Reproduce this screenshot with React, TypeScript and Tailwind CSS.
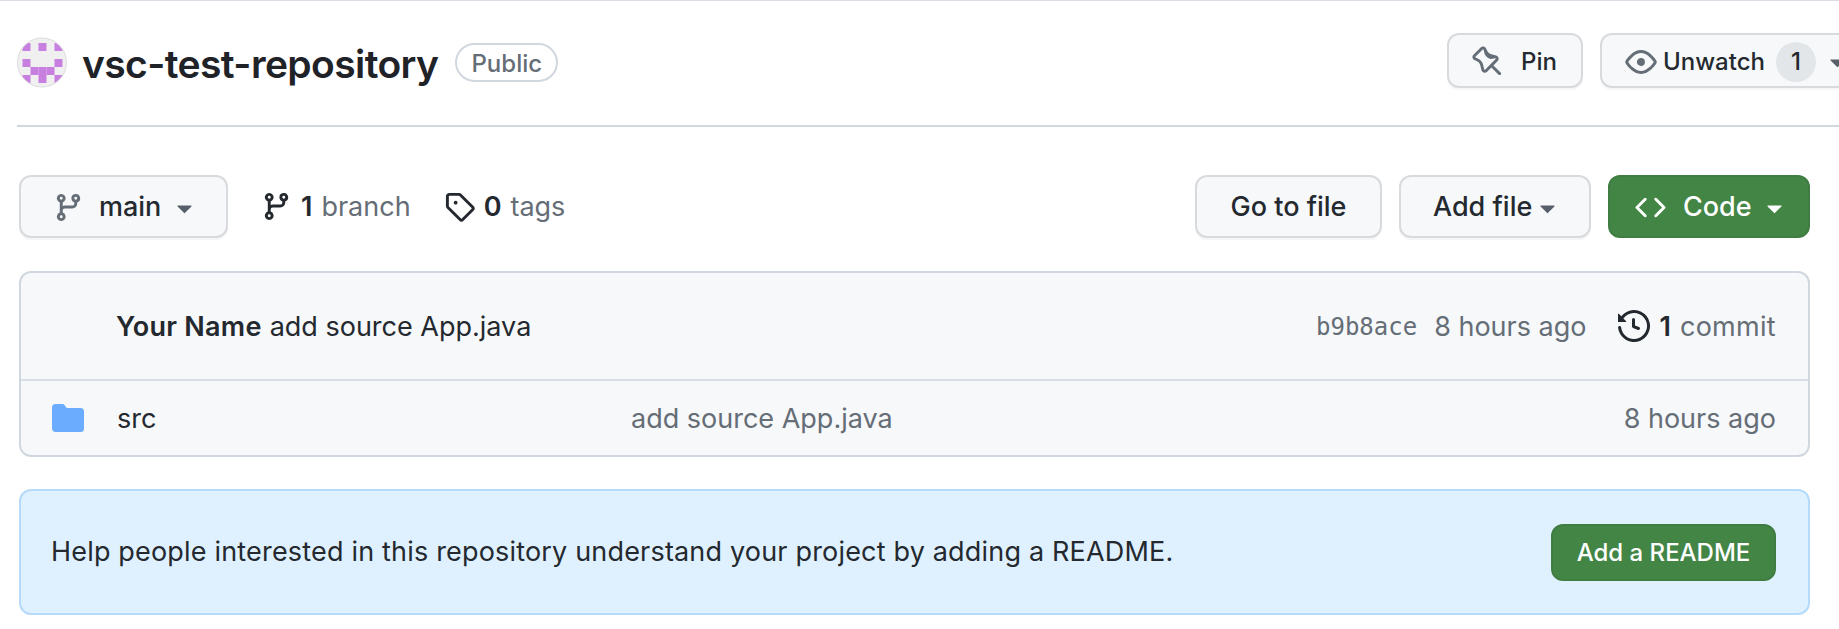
import { type JSX, type ReactNode } from "react";

// octicons, 16px grid
const paths = {
  branch:
    "M9.5 3.25a2.25 2.25 0 1 1 3 2.122V6A2.5 2.5 0 0 1 10 8.5H6a1 1 0 0 0-1 1v1.128a2.251 2.251 0 1 1-1.5 0V5.372a2.25 2.25 0 1 1 1.5 0v1.836A2.493 2.493 0 0 1 6 7h4a1 1 0 0 0 1-1v-.628A2.25 2.25 0 0 1 9.5 3.25Zm-6 0a.75.75 0 1 0 1.5 0 .75.75 0 0 0-1.5 0Zm8.25-.75a.75.75 0 1 0 0 1.5.75.75 0 0 0 0-1.5ZM4.25 12a.75.75 0 1 0 0 1.5.75.75 0 0 0 0-1.5Z",
  tag: "M1 7.775V2.75C1 1.784 1.784 1 2.75 1h5.025c.464 0 .91.184 1.238.513l6.25 6.25a1.75 1.75 0 0 1 0 2.474l-5.026 5.026a1.75 1.75 0 0 1-2.474 0l-6.25-6.25A1.75 1.75 0 0 1 1 7.775Zm1.5 0c0 .066.026.13.073.177l6.25 6.25a.25.25 0 0 0 .354 0l5.025-5.025a.25.25 0 0 0 0-.354l-6.25-6.25a.25.25 0 0 0-.177-.073H2.75a.25.25 0 0 0-.25.25ZM6 5a1 1 0 1 1 0 2 1 1 0 0 1 0-2Z",
  eye: "M8 2c1.981 0 3.671.992 4.933 2.078 1.27 1.091 2.187 2.345 2.637 3.023a1.62 1.62 0 0 1 0 1.798c-.45.678-1.367 1.932-2.637 3.023C11.67 13.008 9.981 14 8 14c-1.981 0-3.671-.992-4.933-2.078C1.797 10.83.88 9.576.43 8.898a1.62 1.62 0 0 1 0-1.798c.45-.677 1.367-1.931 2.637-3.022C4.33 2.992 6.019 2 8 2ZM1.679 7.932a.12.12 0 0 0 0 .136c.411.622 1.241 1.75 2.366 2.717C5.176 11.758 6.527 12.5 8 12.5c1.473 0 2.825-.742 3.955-1.715 1.124-.967 1.954-2.096 2.366-2.717a.12.12 0 0 0 0-.136c-.412-.621-1.242-1.75-2.366-2.717C10.824 4.242 9.473 3.5 8 3.5c-1.473 0-2.825.742-3.955 1.715-1.124.967-1.954 2.096-2.366 2.717ZM8 10a2 2 0 1 1-.001-3.999A2 2 0 0 1 8 10Z",
  code: "m11.28 3.22 4.25 4.25a.75.75 0 0 1 0 1.06l-4.25 4.25a.749.749 0 0 1-1.275-.326.749.749 0 0 1 .215-.734L13.94 8l-3.72-3.72a.749.749 0 0 1 .326-1.275.749.749 0 0 1 .734.215Zm-6.56 0a.751.751 0 0 1 1.042.018.751.751 0 0 1 .018 1.042L2.06 8l3.72 3.72a.749.749 0 0 1-.326 1.275.749.749 0 0 1-.734-.215L.47 8.53a.75.75 0 0 1 0-1.06Z",
  history:
    "m.427 1.927 1.215 1.215a8.002 8.002 0 1 1-1.6 5.685.75.75 0 1 1 1.493-.154 6.5 6.5 0 1 0 1.18-4.458l1.358 1.358A.25.25 0 0 1 3.896 6H.25A.25.25 0 0 1 0 5.75V2.104a.25.25 0 0 1 .427-.177ZM7.75 4a.75.75 0 0 1 .75.75v2.992l2.028.812a.75.75 0 0 1-.557 1.392l-2.5-1A.751.751 0 0 1 7 8.25v-3.5A.75.75 0 0 1 7.75 4Z",
  pin: "M4.456.734a1.75 1.75 0 0 1 2.826.504l.613 1.327a3.081 3.081 0 0 0 2.084 1.707l2.454.584c1.332.317 1.8 1.972.832 2.94L11.06 10l3.72 3.72a.748.748 0 0 1-.332 1.265.75.75 0 0 1-.729-.205L10 11.06l-2.204 2.205c-.968.968-2.623.5-2.94-.832l-.584-2.454a3.081 3.081 0 0 0-1.707-2.084l-1.327-.613a1.75 1.75 0 0 1-.504-2.826L4.456.734ZM5.92 1.866a.25.25 0 0 0-.404-.072L1.794 5.516a.25.25 0 0 0 .072.404l1.328.613A4.582 4.582 0 0 1 5.73 9.63l.584 2.454a.25.25 0 0 0 .42.12l5.47-5.47a.25.25 0 0 0-.12-.42L9.63 6.73a4.581 4.581 0 0 1-3.098-2.537L5.92 1.866Z",
  folder:
    "M1.75 1A1.75 1.75 0 0 0 0 2.75v10.5C0 14.216.784 15 1.75 15h12.5A1.75 1.75 0 0 0 16 13.25v-8.5A1.75 1.75 0 0 0 14.25 3H7.5a.25.25 0 0 1-.2-.1l-.9-1.2C6.07 1.26 5.55 1 5 1H1.75Z",
  caret:
    "m4.427 7.427 3.396 3.396a.25.25 0 0 0 .354 0l3.396-3.396A.25.25 0 0 0 11.396 7H4.604a.25.25 0 0 0-.177.427Z",
};

function Octicon({
  name,
  className,
}: {
  name: keyof typeof paths;
  className: string;
}): JSX.Element {
  return (
    <svg viewBox="0 0 16 16" fill="currentColor" className={`shrink-0 ${className}`}>
      <path d={paths[name]} />
    </svg>
  );
}

const identicon = [
  [0, 0], [2, 0], [4, 0],
  [0, 2], [4, 2],
  [1, 3], [2, 3], [3, 3],
  [0, 4], [2, 4], [4, 4],
];

function Avatar(): JSX.Element {
  return (
    <svg viewBox="0 0 50 50" className="h-[51px] w-[50px] shrink-0">
      <defs>
        <clipPath id="avatar-clip">
          <circle cx="25" cy="25" r="24" />
        </clipPath>
      </defs>
      <circle cx="25" cy="25" r="24.5" fill="#f0f0f0" stroke="#dcdcdc" strokeWidth="1" />
      <g clipPath="url(#avatar-clip)" fill="#c77fe0">
        {identicon.map(([col, row]) => (
          <rect key={`${col}-${row}`} x={5.5 + col * 8} y={5.5 + row * 8} width="8" height="8" />
        ))}
      </g>
    </svg>
  );
}

function Button({
  className,
  children,
}: {
  className: string;
  children: ReactNode;
}): JSX.Element {
  return (
    <div
      className={`flex items-center rounded-[12px] border-2 border-[#d8dadd] bg-[#f6f8fa] pt-[2px] font-medium text-[#24292f] shadow-[0_2px_0_rgba(27,31,36,0.04)] ${className}`}
    >
      {children}
    </div>
  );
}

export default function App(): JSX.Element {
  return (
    <div className="h-[629px] w-[1839px] overflow-hidden border-t border-[#d8dee4] bg-white text-[27px] text-[#24292f] [font-family:Inter,'Liberation_Sans',sans-serif]">
      {/* Repo header */}
      <div className="ml-[17px] flex h-[126px] w-[1900px] items-center border-b-2 border-[#d0d7de] pb-[1px] pr-[57px]">
        <Avatar />
        <span className="ml-[15px] mt-[3px] text-[39px] font-semibold tracking-[-0.6px] text-[#1f2328]">
          vsc-test-repository
        </span>
        <span className="ml-[17px] flex h-[39px] items-center rounded-full border-2 border-[#d0d7de] px-[14px] pt-[2px] text-[24px] font-medium text-[#656d76]">
          Public
        </span>
        <div className="mb-[4px] ml-auto flex gap-[17px]">
          <Button className="h-[55px] w-[136px] pl-[23px]">
            <Octicon name="pin" className="h-[31px] w-[31px] text-[#656d76]" />
            <span className="ml-[18px] text-[24px]">Pin</span>
          </Button>
          <Button className="h-[55px] w-[260px] pl-[23px]">
            <Octicon name="eye" className="h-[32px] w-[32px] text-[#656d76]" />
            <span className="ml-[6px] text-[24px]">Unwatch</span>
            <span className="ml-[11px] flex h-[40px] w-[40px] shrink-0 items-center justify-center rounded-full bg-[#e3e6e8] text-[24px]">
              1
            </span>
            <Octicon name="caret" className="ml-[6px] h-[31px] w-[31px] text-[#57606a]" />
          </Button>
        </div>
      </div>

      {/* Branch bar */}
      <div className="ml-[19px] mr-[29px] mt-[48px] flex items-center">
        <Button className="h-[63px] w-[209px] pl-[32px]">
          <Octicon name="branch" className="h-[31px] w-[31px] text-[#656d76]" />
          <span className="ml-[15px]">main</span>
          <Octicon name="caret" className="ml-[8px] h-[31px] w-[31px] text-[#57606a]" />
        </Button>
        <Octicon name="branch" className="ml-[33px] h-[31px] w-[31px] text-[#24292f]" />
        <span className="ml-[9px] pt-[2px] font-semibold">1</span>
        <span className="ml-[9px] pt-[2px] text-[#656d76]">branch</span>
        <Octicon name="tag" className="ml-[33px] h-[31px] w-[31px] text-[#24292f]" />
        <span className="ml-[9px] pt-[2px] font-semibold">0</span>
        <span className="ml-[9px] pt-[2px] text-[#656d76]">tags</span>
        <div className="ml-auto flex gap-[17px]">
          <Button className="h-[63px] w-[187px] justify-center">Go to file</Button>
          <Button className="h-[63px] w-[192px] pl-[32px]">
            Add file
            <Octicon name="caret" className="h-[31px] w-[31px] text-[#57606a]" />
          </Button>
          <div className="flex h-[63px] w-[202px] items-center rounded-[12px] border-2 border-[#3f7d42] bg-[#428545] pl-[25px] pt-[2px] font-medium text-white">
            <Octicon name="code" className="h-[31px] w-[31px]" />
            <span className="ml-[17px]">Code</span>
            <Octicon name="caret" className="ml-[7px] h-[31px] w-[31px]" />
          </div>
        </div>
      </div>

      {/* File table */}
      <div className="ml-[19px] mr-[29px] mt-[33px] rounded-[12px] border-2 border-[#d0d7de] bg-[#f6f8fa]">
        <div className="flex h-[108px] items-center border-b-2 border-[#d8dee4] pl-[95px] pr-[32px] pt-[2px]">
          <span className="font-semibold tracking-[0.25px]">Your Name</span>
          <span className="ml-[8px]">add source App.java</span>
          <span className="ml-auto text-[24px] text-[#656d76] [font-family:'DejaVu_Sans_Mono',monospace]">
            b9b8ace
          </span>
          <span className="ml-[17px] text-[#656d76]">8 hours ago</span>
          <Octicon name="history" className="mb-[2px] ml-[32px] h-[32px] w-[32px] text-[#24292f]" />
          <span className="ml-[9px] font-semibold">1</span>
          <span className="ml-[9px] tracking-[0.3px] text-[#656d76]">commit</span>
        </div>
        <div className="flex h-[74px] items-center pl-[31px] pr-[32px] pt-[2px]">
          <Octicon name="folder" className="mb-[2px] h-[32px] w-[32px] text-[#6cacfe]" />
          <span className="ml-[33px] w-[514px]">src</span>
          <span className="text-[#656d76]">add source App.java</span>
          <span className="ml-auto text-[#656d76]">8 hours ago</span>
        </div>
      </div>

      {/* README banner */}
      <div className="ml-[19px] mr-[29px] mt-[32px] flex h-[126px] items-center justify-between rounded-[12px] border-2 border-[#b5dafa] bg-[#dff1ff] pl-[30px] pr-[32px]">
        <span className="pt-[1px] tracking-[0.18px]">
          Help people interested in this repository understand your project by adding a README.
        </span>
        <div className="flex h-[57px] w-[225px] items-center justify-center rounded-[12px] border-2 border-[#3f7d42] bg-[#428545] pt-[2px] text-[24px] font-medium text-white">
          Add a README
        </div>
      </div>
    </div>
  );
}
